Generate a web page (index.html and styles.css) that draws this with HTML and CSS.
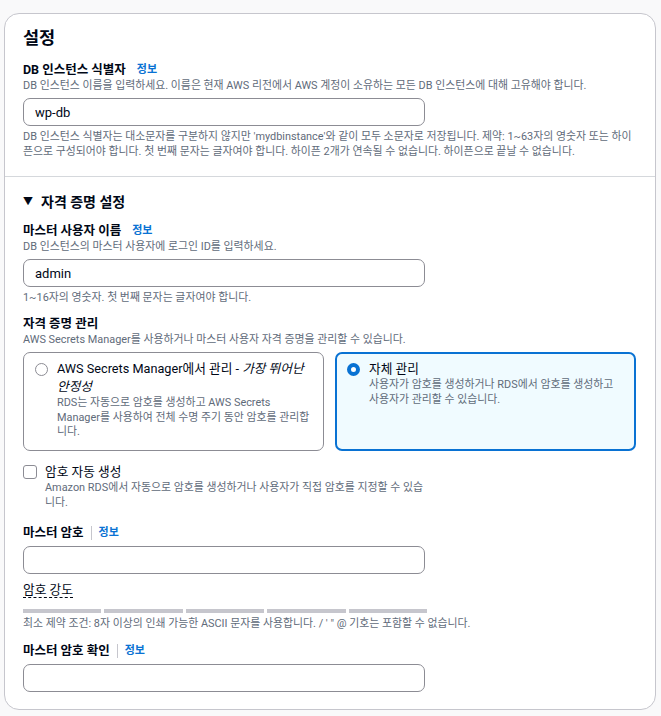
FILE: index.html
```html
<!DOCTYPE html>
<html lang="ko">
<head>
<meta charset="UTF-8">
<meta name="viewport" content="width=device-width, initial-scale=1.0">
<title>설정</title>
<link rel="stylesheet" href="styles.css">
</head>
<body>
  <div class="card">
    <div class="section">
      <h2 class="title">설정</h2>

      <div class="field">
        <div class="label">DB 인스턴스 식별자 <a class="info" href="#">정보</a></div>
        <div class="desc">DB 인스턴스 이름을 입력하세요. 이름은 현재 AWS 리전에서 AWS 계정이 소유하는 모든 DB 인스턴스에 대해 고유해야 합니다.</div>
        <input class="input" type="text" value="wp-db">
        <div class="hint">DB 인스턴스 식별자는 대소문자를 구분하지 않지만 'mydbinstance'와 같이 모두 소문자로 저장됩니다. 제약: 1~63자의 영숫자 또는 하이픈으로 구성되어야 합니다. 첫 번째 문자는 글자여야 합니다. 하이픈 2개가 연속될 수 없습니다. 하이픈으로 끝날 수 없습니다.</div>
      </div>
    </div>

    <div class="section section-creds">
      <div class="expander"><span class="caret">▼</span>자격 증명 설정</div>

      <div class="field field-sub">
        <div class="label">마스터 사용자 이름 <a class="info" href="#">정보</a></div>
        <div class="desc">DB 인스턴스의 마스터 사용자에 로그인 ID를 입력하세요.</div>
        <input class="input" type="text" value="admin">
        <div class="hint">1~16자의 영숫자. 첫 번째 문자는 글자여야 합니다.</div>
      </div>

      <div class="field field-sub">
        <div class="label">자격 증명 관리</div>
        <div class="desc">AWS Secrets Manager를 사용하거나 마스터 사용자 자격 증명을 관리할 수 있습니다.</div>
        <div class="tiles">
          <div class="tile">
            <span class="radio"></span>
            <div class="tile-body">
              <div class="tile-title">AWS Secrets Manager에서 관리 - <em>가장 뛰어난 안정성</em></div>
              <div class="tile-desc">RDS는 자동으로 암호를 생성하고 AWS Secrets Manager를 사용하여 전체 수명 주기 동안 암호를 관리합니다.</div>
            </div>
          </div>
          <div class="tile tile-selected">
            <span class="radio radio-checked"></span>
            <div class="tile-body">
              <div class="tile-title">자체 관리</div>
              <div class="tile-desc">사용자가 암호를 생성하거나 RDS에서 암호를 생성하고 사용자가 관리할 수 있습니다.</div>
            </div>
          </div>
        </div>
      </div>

      <div class="check-row">
        <span class="checkbox"></span>
        <div class="check-body">
          <div class="check-title">암호 자동 생성</div>
          <div class="check-desc">Amazon RDS에서 자동으로 암호를 생성하거나 사용자가 직접 암호를 지정할 수 있습니다.</div>
        </div>
      </div>

      <div class="field field-pw">
        <div class="label">마스터 암호<span class="sep"></span><a class="info" href="#">정보</a></div>
        <input class="input" type="password">
        <div class="strength-label"><span>암호 강도</span></div>
        <div class="strength">
          <span></span><span></span><span></span><span></span><span></span>
        </div>
        <div class="hint">최소 제약 조건: 8자 이상의 인쇄 가능한 ASCII 문자를 사용합니다. / ' " @ 기호는 포함할 수 없습니다.</div>
      </div>

      <div class="field">
        <div class="label">마스터 암호 확인<span class="sep"></span><a class="info" href="#">정보</a></div>
        <input class="input" type="password">
      </div>
    </div>
  </div>
</body>
</html>
```

FILE: styles.css
```css
body {
  margin: 0;
  padding: 13px 5px 7px 4px;
  background-color: #f9f9fa;
  font-family: Roboto, "Noto Sans CJK KR", sans-serif;
  color: #000716;
}
.card {
  background-color: #ffffff;
  border: 1px solid #c6c6cd;
  border-radius: 15px;
}
.section {
  padding: 13px 19px 17px 18px;
}
.section-creds {
  border-top: 1px solid #d5d8dc;
  padding-top: 15px;
  padding-bottom: 17px;
}
.title {
  margin: 0;
  font-size: 17.5px;
  line-height: 22px;
  font-weight: 700;
}
.field {
  margin-top: 12px;
}
.section > .field:first-of-type {
  margin-top: 13px;
}
.field-sub {
  margin-top: 11px;
}
.field-pw {
  margin-top: 15px;
}
.label {
  font-size: 12.5px;
  line-height: 16px;
  font-weight: 700;
  display: flex;
  align-items: center;
}
.info {
  color: #0972d3;
  font-size: 11px;
  font-weight: 700;
  text-decoration: none;
  margin-left: 11px;
}
.sep {
  display: inline-block;
  width: 1px;
  height: 14px;
  background-color: #c6c6cd;
  margin-left: 7px;
}
.sep + .info {
  margin-left: 7px;
}
.desc,
.hint {
  font-size: 10.9px;
  line-height: 15px;
  color: #5f6b7a;
}
.input {
  display: block;
  box-sizing: border-box;
  width: 402px;
  height: 28px;
  margin-top: 5px;
  padding: 0 11px;
  border: 1px solid #8c8c94;
  border-radius: 7px;
  font-family: Roboto, "Noto Sans CJK KR", sans-serif;
  font-size: 13px;
  color: #000716;
  background-color: #ffffff;
}
.hint {
  margin-top: 3px;
}
.expander {
  font-size: 14px;
  line-height: 20px;
  font-weight: 700;
  display: flex;
  align-items: center;
}
.caret {
  font-size: 10px;
  margin-right: 8px;
}
.tiles {
  display: grid;
  grid-template-columns: 1fr 1fr;
  gap: 11px;
  margin-top: 5px;
}
.tile {
  display: flex;
  gap: 9px;
  padding: 7px 10px 10px 11px;
  border: 1px solid #8c8c94;
  border-radius: 7px;
}
.tile-selected {
  border: 2px solid #0972d3;
  background-color: #f0fbff;
  padding: 6px 10px 9px 10px;
}
.radio {
  flex: none;
  box-sizing: border-box;
  width: 13px;
  height: 13px;
  margin-top: 3px;
  border: 1px solid #8c8c94;
  border-radius: 50%;
  background-color: #ffffff;
}
.radio-checked {
  border: 4px solid #0972d3;
}
.tile-title {
  font-size: 12.7px;
  line-height: 18px;
  word-break: keep-all;
}
.tile-title em {
  font-style: italic;
}
.tile-desc {
  font-size: 10.9px;
  line-height: 14.5px;
  color: #5f6b7a;
}
.check-row {
  display: flex;
  gap: 8px;
  margin-top: 13px;
  width: 410px;
}
.checkbox {
  flex: none;
  box-sizing: border-box;
  width: 14px;
  height: 14px;
  margin-top: 1px;
  border: 1px solid #8c8c94;
  border-radius: 3px;
}
.check-title {
  font-size: 12.7px;
  line-height: 16px;
}
.check-desc {
  font-size: 10.9px;
  line-height: 15px;
  color: #5f6b7a;
}
.strength-label {
  margin-top: 8px;
  font-size: 12.7px;
  line-height: 16px;
}
.strength-label span {
  border-bottom: 1px dashed #000716;
}
.strength {
  display: flex;
  gap: 3px;
  width: 404px;
  margin-top: 11px;
}
.strength span {
  flex: 1;
  height: 4px;
  background-color: #c6c6cd;
}
```
